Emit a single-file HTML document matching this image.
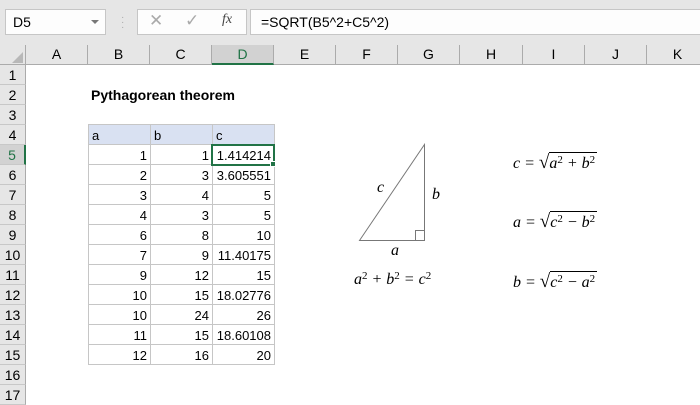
<!DOCTYPE html>
<html><head><style>
*{margin:0;padding:0;box-sizing:border-box}
body{width:700px;height:400px;overflow:hidden;background:#fff;font-family:"Liberation Sans",Arial,sans-serif;position:relative;font-size:13px;color:#000}
.abs{position:absolute}
.tb{left:0;top:0;width:700px;height:45px;background:#e6e6e6}
.box{background:#fdfdfd;border:1px solid #c6c6c6}
.ch{top:45px;height:20px;background:#e6e6e6;border-bottom:1px solid #ababab;border-right:1px solid #ababab;text-align:center;line-height:19px;font-size:14px}
.rh{left:0;width:26px;height:20px;background:#e6e6e6;border-right:1px solid #ababab;border-bottom:1px solid #c8c8c8;text-align:center;line-height:20px;font-size:14px}
.g{left:88px;top:124px;display:grid;grid-template-columns:61px 61px 61px;grid-auto-rows:19px;gap:1px;padding:1px;background:#c6c6c6}
.g div{background:#fff;text-align:right;padding:1px 3px 0;line-height:19px;font-size:13px}
.g .h{background:#d9e1f2;text-align:left}
.m{font-family:"Liberation Serif",serif;font-style:italic;font-size:16px;white-space:nowrap}
sup{font-size:11px;font-style:normal;vertical-align:5px;line-height:0}
.sq{font-style:normal;font-size:19px}
.ov{border-top:1px solid #000;padding-top:2px;padding-right:2px}
</style></head><body>
<div class="abs tb"></div>
<div class="abs box" style="left:5px;top:9px;width:101px;height:26px;line-height:24px;padding-left:7px;font-size:14px">D5</div>
<div class="abs" style="left:91px;top:20px;width:0;height:0;border-left:4px solid transparent;border-right:4px solid transparent;border-top:4px solid #777"></div>
<div class="abs" style="left:121px;top:15px;color:#aaa;font-size:10px;line-height:5px">·<br>·<br>·</div>
<div class="abs box" style="left:137px;top:9px;width:110px;height:26px"></div>
<div class="abs" style="left:149px;top:11px;color:#aaa;font-size:17px">✕</div>
<div class="abs" style="left:185px;top:11px;color:#aaa;font-size:17px">✓</div>
<div class="abs" style="left:222px;top:12px;font-family:'Liberation Serif',serif;font-style:italic;font-size:14px;color:#444">fx</div>
<div class="abs box" style="left:250px;top:9px;width:460px;height:26px;line-height:24px;padding-left:10px;font-size:14px">=SQRT(B5^2+C5^2)</div>
<div class="abs" style="left:0;top:45px;width:26px;height:20px;background:#e6e6e6;border-right:1px solid #ababab;border-bottom:1px solid #ababab"></div>
<div class="abs" style="left:12px;top:52px;width:0;height:0;border-left:11px solid transparent;border-bottom:11px solid #b8b8b8"></div>
<div class="abs ch" style="left:26px;width:62px">A</div>
<div class="abs ch" style="left:88px;width:62px">B</div>
<div class="abs ch" style="left:150px;width:62px">C</div>
<div class="abs ch" style="left:212px;width:62px;background:#d2d2d2;border-bottom:2px solid #217346;color:#217346">D</div>
<div class="abs ch" style="left:274px;width:62px">E</div>
<div class="abs ch" style="left:336px;width:62px">F</div>
<div class="abs ch" style="left:398px;width:62px">G</div>
<div class="abs ch" style="left:460px;width:63px">H</div>
<div class="abs ch" style="left:523px;width:62px">I</div>
<div class="abs ch" style="left:585px;width:62px">J</div>
<div class="abs ch" style="left:647px;width:62px">K</div>
<div class="abs rh" style="top:65px">1</div><div class="abs rh" style="top:85px">2</div><div class="abs rh" style="top:105px">3</div><div class="abs rh" style="top:125px">4</div>
<div class="abs rh" style="top:145px;background:#d2d2d2;border-right:2px solid #217346;color:#217346">5</div>
<div class="abs rh" style="top:165px">6</div><div class="abs rh" style="top:185px">7</div><div class="abs rh" style="top:205px">8</div><div class="abs rh" style="top:225px">9</div><div class="abs rh" style="top:245px">10</div><div class="abs rh" style="top:265px">11</div><div class="abs rh" style="top:285px">12</div><div class="abs rh" style="top:305px">13</div><div class="abs rh" style="top:325px">14</div><div class="abs rh" style="top:345px">15</div><div class="abs rh" style="top:365px">16</div><div class="abs rh" style="top:385px">17</div>
<div class="abs" style="left:91px;top:87px;font-weight:bold;font-size:14px">Pythagorean theorem</div>
<div class="abs g">
<div class="h">a</div><div class="h">b</div><div class="h">c</div>
<div>1</div><div>1</div><div>1.414214</div>
<div>2</div><div>3</div><div>3.605551</div>
<div>3</div><div>4</div><div>5</div>
<div>4</div><div>3</div><div>5</div>
<div>6</div><div>8</div><div>10</div>
<div>7</div><div>9</div><div>11.40175</div>
<div>9</div><div>12</div><div>15</div>
<div>10</div><div>15</div><div>18.02776</div>
<div>10</div><div>24</div><div>26</div>
<div>11</div><div>15</div><div>18.60108</div>
<div>12</div><div>16</div><div>20</div>
</div>
<div class="abs" style="left:211px;top:144px;width:64px;height:22px;border:2px solid #217346"></div>
<div class="abs" style="left:270px;top:161px;width:6px;height:6px;background:#217346;border:1px solid #fff"></div>
<svg class="abs" style="left:0;top:0" width="700" height="400"><g fill="none" stroke="#777" stroke-width="1"><path d="M359.5 240.5 L424.5 144.5 L424.5 240.5 Z"/><path d="M415.5 240.5 V230.5 H424.5"/></g></svg>
<div class="abs m" style="left:377px;top:179px">c</div>
<div class="abs m" style="left:432px;top:186px">b</div>
<div class="abs m" style="left:391px;top:242px">a</div>
<div class="abs m" style="left:354px;top:271px">a<sup>2</sup> + b<sup>2</sup> = c<sup>2</sup></div>
<div class="abs m" style="left:513px;top:152px">c = <span class="sq">√</span><span class="ov">a<sup>2</sup> + b<sup>2</sup></span></div>
<div class="abs m" style="left:513px;top:211px">a = <span class="sq">√</span><span class="ov">c<sup>2</sup> − b<sup>2</sup></span></div>
<div class="abs m" style="left:513px;top:271px">b = <span class="sq">√</span><span class="ov">c<sup>2</sup> − a<sup>2</sup></span></div>
</body></html>
